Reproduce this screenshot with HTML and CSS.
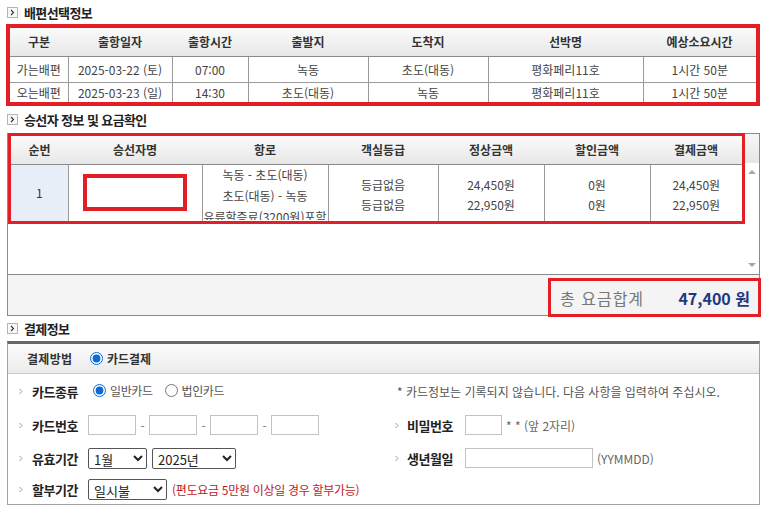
FILE: index.html
```html
<!DOCTYPE html>
<html lang="ko">
<head>
    <meta charset="UTF-8">
    <meta name="viewport" content="width=device-width, initial-scale=1.0">
    <title>예매 확인</title>
    <link rel="stylesheet" href="styles.css">
</head>
<body>
<div class="page">
    <h3 class="sec-title head-trip">
        <svg class="sec-ico" width="11" height="11" viewBox="0 0 11 11"><rect x="0.5" y="0.5" width="10" height="10" fill="#f7f7f7" stroke="#b4b4b4"/><polyline points="4,3 6.5,5.5 4,8" fill="none" stroke="#333" stroke-width="1.1"/></svg>
        배편선택정보
    </h3>
    <div class="mark mark-trip">
        <table class="grid trip">
            <colgroup>
                <col style="width:58px"><col style="width:104px"><col style="width:76px"><col style="width:120px"><col style="width:120px"><col style="width:155px"><col style="width:113px">
            </colgroup>
            <thead>
                <tr><th>구분</th><th>출항일자</th><th>출항시간</th><th>출발지</th><th>도착지</th><th>선박명</th><th>예상소요시간</th></tr>
            </thead>
            <tbody>
                <tr class="row-go"><td>가는배편</td><td>2025-03-22 (토)</td><td>07:00</td><td>녹동</td><td>초도(대동)</td><td>평화페리11호</td><td>1시간 50분</td></tr>
                <tr class="row-back"><td>오는배편</td><td>2025-03-23 (일)</td><td>14:30</td><td>초도(대동)</td><td>녹동</td><td>평화페리11호</td><td>1시간 50분</td></tr>
            </tbody>
        </table>
    </div>

    <h3 class="sec-title head-fare">
        <svg class="sec-ico" width="11" height="11" viewBox="0 0 11 11"><rect x="0.5" y="0.5" width="10" height="10" fill="#f7f7f7" stroke="#b4b4b4"/><polyline points="4,3 6.5,5.5 4,8" fill="none" stroke="#333" stroke-width="1.1"/></svg>
        승선자 정보 및 요금확인
    </h3>
    <div class="fare-box">
        <div class="fare-scroll">
            <div class="fare-list">
                <div class="mark mark-fare">
                    <table class="grid fare">
                        <colgroup>
                            <col style="width:57px"><col style="width:134px"><col style="width:126px"><col style="width:110px"><col style="width:106px"><col style="width:106px"><col style="width:92px">
                        </colgroup>
                        <thead>
                            <tr><th>순번</th><th>승선자명</th><th>항로</th><th>객실등급</th><th>정상금액</th><th>할인금액</th><th>결제금액</th></tr>
                        </thead>
                        <tbody>
                            <tr>
                                <td class="no">1</td>
                                <td><div class="name-mark"></div></td>
                                <td><div class="route">녹동 - 초도(대동)<br>초도(대동) - 녹동<br>유류할증료(3200원)포함</div></td>
                                <td><div class="two">등급없음<br>등급없음</div></td>
                                <td><div class="two">24,450원<br>22,950원</div></td>
                                <td><div class="two">0원<br>0원</div></td>
                                <td><div class="two">24,450원<br>22,950원</div></td>
                            </tr>
                        </tbody>
                    </table>
                </div>
            </div>
            <div class="vscroll">
                <span class="arr arr-up"></span>
                <span class="arr arr-down"></span>
            </div>
        </div>
        <div class="fare-total">
            <div class="mark total-mark">
                <span class="total-label">총 요금합계</span>
                <span class="total-num">47,400 원</span>
            </div>
        </div>
    </div>

    <h3 class="sec-title head-pay">
        <svg class="sec-ico" width="11" height="11" viewBox="0 0 11 11"><rect x="0.5" y="0.5" width="10" height="10" fill="#f7f7f7" stroke="#b4b4b4"/><polyline points="4,3 6.5,5.5 4,8" fill="none" stroke="#333" stroke-width="1.1"/></svg>
        결제정보
    </h3>
    <div class="pay-box">
        <div class="pay-method">
            <span class="method-label">결제방법</span>
            <label class="radio"><input type="radio" name="method" checked>카드결제</label>
        </div>
        <div class="pay-grid">
            <div class="field">
                <svg class="chev" width="13" height="7" viewBox="0 0 13 7"><polyline points="0.5,1 3,3.5 0.5,6" fill="none" stroke="#999"/></svg>
                <span class="f-label">카드종류</span>
                <label class="opt"><input type="radio" name="ctype" checked>일반카드</label>
                <label class="opt"><input type="radio" name="ctype">법인카드</label>
            </div>
            <div class="field note">* 카드정보는 기록되지 않습니다. 다음 사항을 입력하여 주십시오.</div>

            <div class="field">
                <svg class="chev" width="13" height="7" viewBox="0 0 13 7"><polyline points="0.5,1 3,3.5 0.5,6" fill="none" stroke="#999"/></svg>
                <span class="f-label">카드번호</span>
                <input class="txt card" type="text"><span class="dash">-</span>
                <input class="txt card" type="text"><span class="dash">-</span>
                <input class="txt card" type="text"><span class="dash">-</span>
                <input class="txt card" type="text">
            </div>
            <div class="field">
                <svg class="chev" width="12" height="7" viewBox="0 0 12 7"><polyline points="0.5,1 3,3.5 0.5,6" fill="none" stroke="#999"/></svg>
                <span class="f-label r-label">비밀번호</span>
                <input class="txt pw" type="password">
                <span class="hint">* * (앞 2자리)</span>
            </div>

            <div class="field">
                <svg class="chev" width="13" height="7" viewBox="0 0 13 7"><polyline points="0.5,1 3,3.5 0.5,6" fill="none" stroke="#999"/></svg>
                <span class="f-label">유효기간</span>
                <select class="sel sel-month"><option>1월</option></select>
                <select class="sel sel-year"><option>2025년</option></select>
            </div>
            <div class="field">
                <svg class="chev" width="12" height="7" viewBox="0 0 12 7"><polyline points="0.5,1 3,3.5 0.5,6" fill="none" stroke="#999"/></svg>
                <span class="f-label r-label">생년월일</span>
                <input class="txt birth" type="text">
                <span class="hint">(YYMMDD)</span>
            </div>

            <div class="field">
                <svg class="chev" width="13" height="7" viewBox="0 0 13 7"><polyline points="0.5,1 3,3.5 0.5,6" fill="none" stroke="#999"/></svg>
                <span class="f-label">할부기간</span>
                <select class="sel sel-inst"><option>일시불</option></select>
                <span class="warn">(편도요금 5만원 이상일 경우 할부가능)</span>
            </div>
            <div class="field"></div>
        </div>
    </div>
</div>
</body>
</html>
```

FILE: styles.css
```css
* {
    box-sizing: border-box;
}
body {
    margin: 0;
    font-family: "Noto Sans CJK KR", "Noto Sans", sans-serif;
    font-size: 12px;
    color: #444;
    background: #fff;
}
.page {
    width: 764px;
    padding: 0 4px 0 6px;
}

/* section titles */
.sec-title {
    display: flex;
    align-items: center;
    gap: 6px;
    margin: 0;
    padding-left: 1px;
    font-size: 13px;
    font-weight: bold;
    letter-spacing: -0.6px;
    color: #222;
}
.head-trip {
    height: 24px;
}
.head-fare {
    height: 27px;
}
.head-pay {
    height: 25px;
}
.sec-ico {
    flex: none;
}

/* red marks */
.mark {
    border: 4px solid #e31e26;
}
.mark-trip {
    width: 754px;
}

/* tables */
.grid {
    width: 100%;
    border-collapse: collapse;
    table-layout: fixed;
}
.grid th {
    height: 28px;
    padding: 0;
    background: linear-gradient(#fbfbfb, #e7e7e7);
    border-bottom: 1px solid #8a8a8a;
    font-weight: bold;
    color: #333;
    text-align: center;
}
.grid td {
    padding: 0;
    border-left: 1px solid #9a9a9a;
    border-top: 1px solid #9a9a9a;
    text-align: center;
    white-space: nowrap;
}
.grid td:first-child {
    border-left: 0;
}
.trip .row-go td {
    height: 26px;
}
.trip .row-back td {
    height: 20px;
}

/* fare box */
.fare-box {
    width: 753px;
    margin-left: 1px;
    border: 1px solid #8a8a8a;
}
.fare-scroll {
    display: flex;
    height: 140px;
}
.fare-list {
    flex: 1;
}
.mark-fare {
    border-width: 3px;
    margin-top: -1px;
    height: 91px;
}
.fare td {
    height: 57px;
    vertical-align: middle;
}
.fare .no {
    background: #e7eef7;
    color: #333;
}
.name-mark {
    width: 104px;
    height: 37px;
    margin: 0 auto;
    border: 4px solid #e31e26;
    background: #fff;
}
.route {
    height: 56px;
    margin-top: -1px;
    overflow: hidden;
    line-height: 21px;
}
.two {
    padding-top: 5px;
    line-height: 20px;
}
.vscroll {
    width: 14px;
    position: relative;
    background: linear-gradient(#f6f6f6, #e6e6e6) no-repeat top / 100% 29px, #fff;
}
.arr {
    position: absolute;
    left: 3px;
    width: 0;
    height: 0;
    border-left: 4px solid transparent;
    border-right: 4px solid transparent;
}
.arr-up {
    top: 36px;
    border-bottom: 4px solid #a8a8a8;
}
.arr-down {
    bottom: 7px;
    border-top: 4px solid #a8a8a8;
}
.fare-total {
    display: flex;
    justify-content: flex-end;
    height: 41px;
    border-top: 1px solid #8a8a8a;
    background: #f4f4f4;
}
.total-mark {
    display: flex;
    align-items: center;
    justify-content: space-between;
    width: 213px;
    height: 39px;
    margin: 3px -2px -1px 0;
    padding: 0 8px 0 9px;
    border-width: 3px;
    font-size: 16px;
}
.total-label {
    color: #777;
    letter-spacing: 1px;
}
.total-num {
    font-weight: bold;
    color: #1d3a80;
}

/* payment */
.pay-box {
    width: 753px;
    margin-left: 1px;
    border: 1px solid #a3a3a3;
    border-top: 3px solid #666;
}
.pay-method {
    display: flex;
    align-items: center;
    height: 30px;
    padding-left: 19px;
    background: linear-gradient(#fcfcfc, #ebebeb);
    border-bottom: 1px solid #cacaca;
    font-weight: bold;
    color: #333;
}
.method-label {
    width: 63px;
    letter-spacing: 0.3px;
}
.radio {
    display: flex;
    align-items: center;
}
input[type="radio"] {
    width: 13px;
    height: 13px;
    margin: 0 4px 0 0;
    accent-color: #0a6bd6;
}
.pay-grid {
    display: grid;
    grid-template-columns: 376px 1fr;
    grid-template-rows: 34px 34px 32px 30px;
    padding-left: 11px;
}
.field {
    display: flex;
    align-items: center;
}
.chev {
    flex: none;
}
.f-label {
    width: 56px;
    font-size: 13px;
    font-weight: bold;
    letter-spacing: -0.5px;
    color: #222;
}
.r-label {
    width: 58px;
}
.opt {
    display: flex;
    align-items: center;
    margin: 0 8px 2px 5px;
    color: #555;
    letter-spacing: -0.4px;
}
.opt + .opt {
    margin-left: 4px;
}
.note {
    padding-left: 2px;
    color: #555;
    letter-spacing: 0;
}
.txt {
    height: 20px;
    border: 1px solid #c2c2c2;
    padding: 0 3px;
    font-family: inherit;
}
.card {
    width: 48px;
}
.dash {
    width: 13px;
    text-align: center;
    color: #777;
}
.pw {
    width: 37px;
}
.birth {
    width: 128px;
}
.hint {
    margin-left: 4px;
    color: #666;
}
.sel {
    height: 21px;
    margin-right: 5px;
    padding: 0 1px;
    border: 1px solid #555;
    border-radius: 2px;
    background: #fff;
    font-family: inherit;
    font-size: 13px;
    color: #222;
}
.sel-month {
    width: 59px;
}
.sel-year {
    width: 84px;
}
.sel-inst {
    width: 79px;
}
.warn {
    color: #c0181f;
    letter-spacing: -0.3px;
}
```
